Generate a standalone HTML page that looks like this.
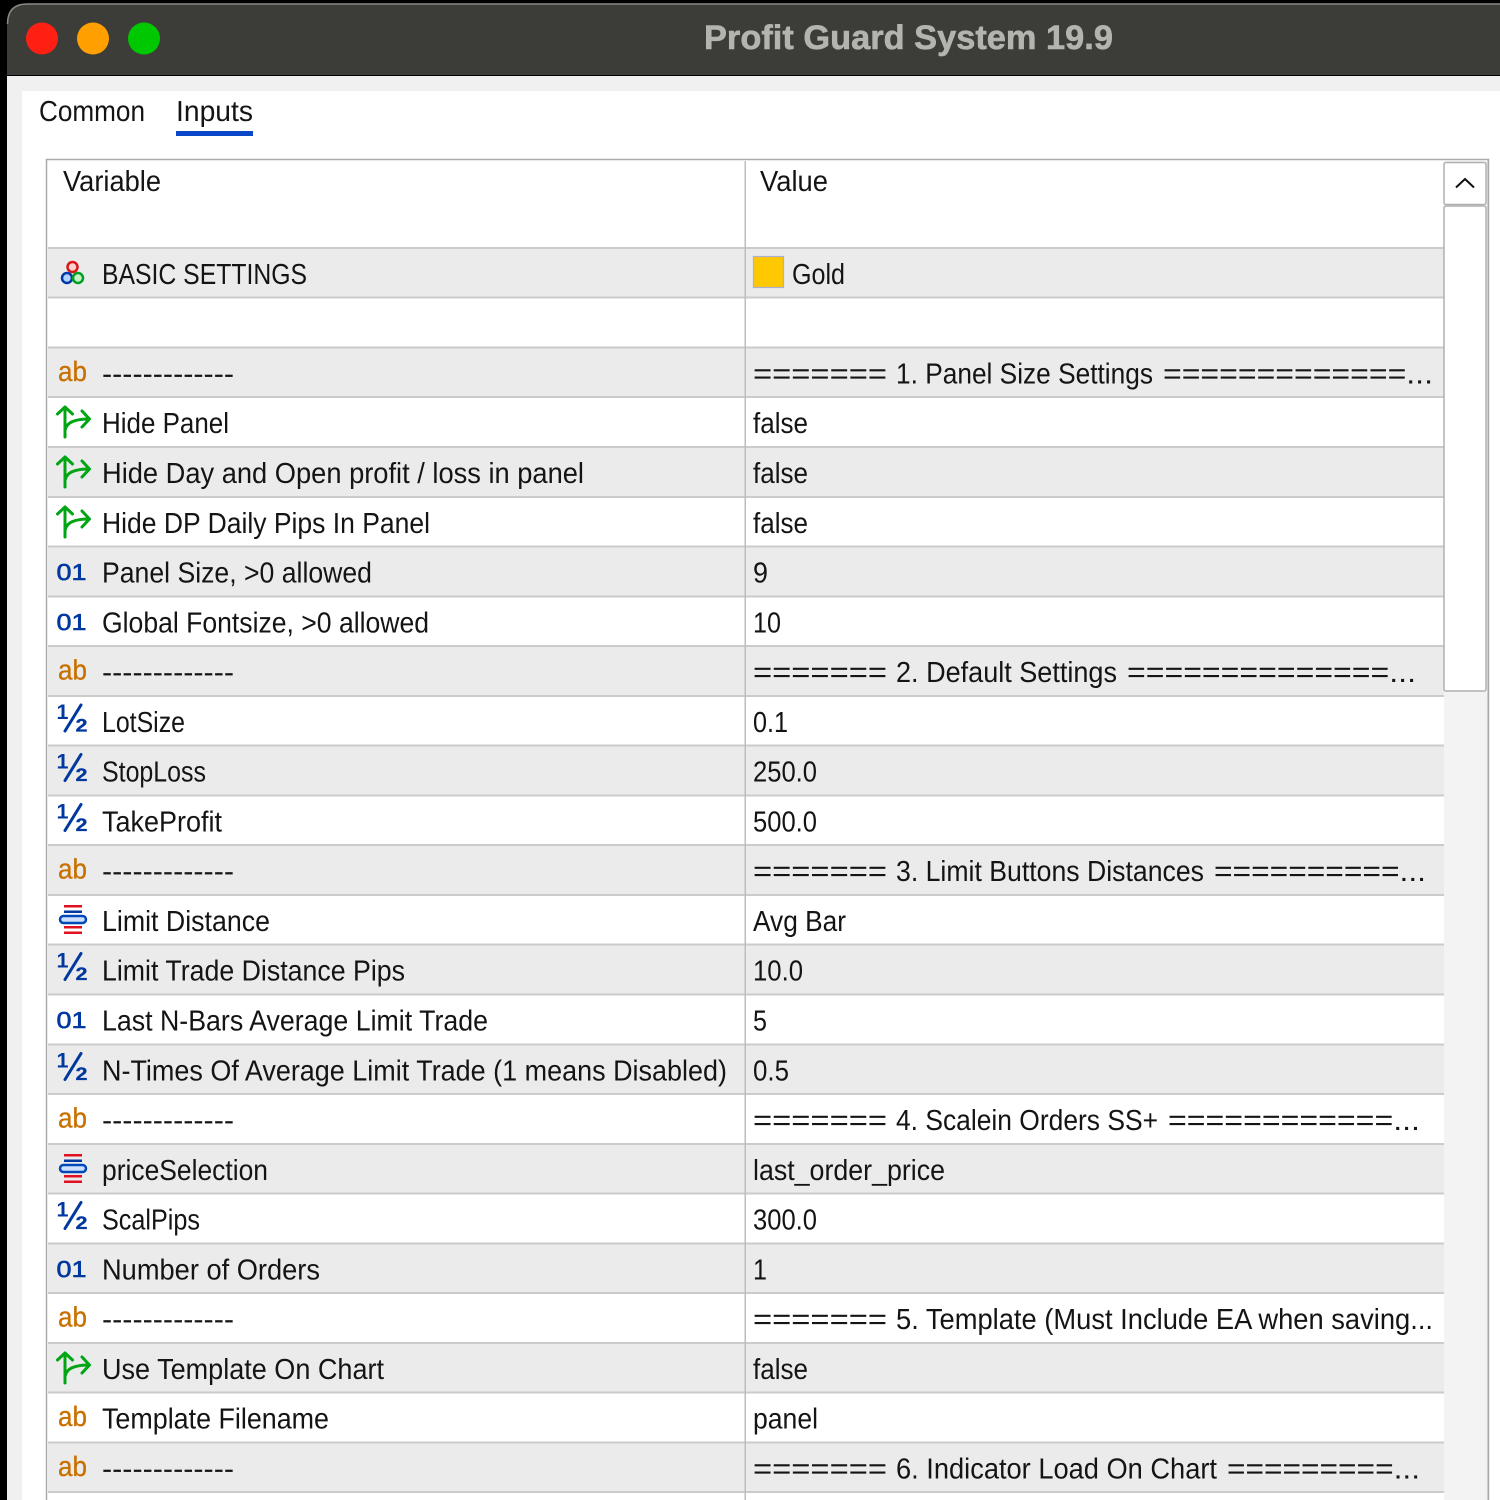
<!DOCTYPE html>
<html><head><meta charset="utf-8"><title>Profit Guard System 19.9</title>
<style>
html,body{margin:0;padding:0;background:#000;width:1500px;height:1500px;overflow:hidden}
svg{display:block}
text{font-family:"Liberation Sans",sans-serif;text-rendering:geometricPrecision}
.t{font-size:29px;fill:#141414}
.ab{font-size:28px;fill:#c87000;stroke:#c87000;stroke-width:.3}
.n{font-size:23px;fill:#0038a0;stroke:#0038a0;stroke-width:.6}
.h1{font-size:21px;fill:#0038a0;font-weight:bold}
.h2{font-size:18px;fill:#0038a0;font-weight:bold;stroke:#0038a0;stroke-width:.3}
.g{fill:#ebebeb}
.l{fill:#cbcbcb}
.arr{fill:none;stroke:#00a514;stroke-width:3;stroke-linecap:round;stroke-linejoin:round}
</style></head><body>
<svg width="1500" height="1500" viewBox="0 0 1500 1500" xmlns="http://www.w3.org/2000/svg">
<defs>
<g id="arrow"><path class="arr" d="M65 41V11M57.500 18L65 11L72.500 18M65.500 33C67 27 74 23 89 23M82 15L89.500 23L82 31"/></g>
<g id="half"><path d="M81 10L65 36" fill="none" stroke="#0038a0" stroke-width="3" stroke-linecap="round"/></g>
<g id="enum"><rect x="64" y="11" width="18" height="2.500" fill="#e01020"/><rect x="64" y="16.500" width="18" height="2.500" fill="#0038a0"/><rect x="60" y="22" width="26" height="7" rx="3.500" fill="#cfe0ff" stroke="#0048b8" stroke-width="2.500"/><rect x="64" y="32" width="18" height="2.500" fill="#e01020"/><rect x="64" y="37.500" width="18" height="2.500" fill="#e01020"/></g>
</defs>
<rect width="1500" height="1500" fill="#000"/>
<!-- window -->
<rect x="7" y="76" width="1493" height="1424" fill="#f0f0f0"/>
<rect x="22" y="91" width="1478" height="1409" fill="#fff"/>
<!-- title bar -->
<path d="M7 75V24Q7 4 27 4H1500V75Z" fill="#3c3d38" stroke="none"/>
<path d="M7.500 24Q7.500 4 27 4H1500" fill="none" stroke="#8a8a88" stroke-width="1.500"/>
<circle cx="42" cy="38.500" r="16" fill="#ff2014"/>
<circle cx="93" cy="38.500" r="16" fill="#ffa000"/>
<circle cx="144" cy="38.500" r="16" fill="#00c800"/>
<text x="704" y="49" font-size="34" font-weight="bold" fill="#b4b4ae" stroke="#b4b4ae" stroke-width=".6" textLength="409" lengthAdjust="spacingAndGlyphs">Profit Guard System 19.9</text>
<!-- tabs -->
<text class="t" x="39" y="121" textLength="106" lengthAdjust="spacingAndGlyphs">Common</text>
<text class="t" x="176" y="121" textLength="77" lengthAdjust="spacingAndGlyphs">Inputs</text>
<rect x="176" y="131" width="77" height="5" fill="#0a46c8"/>
<!-- table frame -->
<rect x="46.500" y="159.500" width="1442" height="1345" fill="#fff" stroke="#aaa" stroke-width="1.500"/>
<text class="t" x="63" y="191" textLength="98" lengthAdjust="spacingAndGlyphs">Variable</text>
<text class="t" x="760" y="191" textLength="68" lengthAdjust="spacingAndGlyphs">Value</text>
<!-- row backgrounds -->
<rect class="g" x="48" y="247" width="1396" height="50"/>
<rect class="g" x="48" y="347" width="1396" height="50"/>
<rect class="g" x="48" y="446.500" width="1396" height="50"/>
<rect class="g" x="48" y="546" width="1396" height="50"/>
<rect class="g" x="48" y="645.500" width="1396" height="50"/>
<rect class="g" x="48" y="745" width="1396" height="50"/>
<rect class="g" x="48" y="845" width="1396" height="50"/>
<rect class="g" x="48" y="944.500" width="1396" height="50"/>
<rect class="g" x="48" y="1044" width="1396" height="50"/>
<rect class="g" x="48" y="1143.500" width="1396" height="50"/>
<rect class="g" x="48" y="1243" width="1396" height="50"/>
<rect class="g" x="48" y="1342.500" width="1396" height="50"/>
<rect class="g" x="48" y="1442" width="1396" height="50"/>
<!-- row lines -->
<rect class="l" x="48" y="247" width="1396" height="2"/>
<rect class="l" x="48" y="296.500" width="1396" height="2"/>
<rect class="l" x="48" y="346.500" width="1396" height="2"/>
<rect class="l" x="48" y="396" width="1396" height="2"/>
<rect class="l" x="48" y="446" width="1396" height="2"/>
<rect class="l" x="48" y="496" width="1396" height="2"/>
<rect class="l" x="48" y="545.500" width="1396" height="2"/>
<rect class="l" x="48" y="595.500" width="1396" height="2"/>
<rect class="l" x="48" y="645" width="1396" height="2"/>
<rect class="l" x="48" y="695" width="1396" height="2"/>
<rect class="l" x="48" y="744.500" width="1396" height="2"/>
<rect class="l" x="48" y="794.500" width="1396" height="2"/>
<rect class="l" x="48" y="844" width="1396" height="2"/>
<rect class="l" x="48" y="894" width="1396" height="2"/>
<rect class="l" x="48" y="943.500" width="1396" height="2"/>
<rect class="l" x="48" y="993.500" width="1396" height="2"/>
<rect class="l" x="48" y="1043.500" width="1396" height="2"/>
<rect class="l" x="48" y="1093" width="1396" height="2"/>
<rect class="l" x="48" y="1143" width="1396" height="2"/>
<rect class="l" x="48" y="1192.500" width="1396" height="2"/>
<rect class="l" x="48" y="1242.500" width="1396" height="2"/>
<rect class="l" x="48" y="1292" width="1396" height="2"/>
<rect class="l" x="48" y="1342" width="1396" height="2"/>
<rect class="l" x="48" y="1391.500" width="1396" height="2"/>
<rect class="l" x="48" y="1441.500" width="1396" height="2"/>
<rect class="l" x="48" y="1491" width="1396" height="2"/>
<rect x="744.500" y="161" width="1.500" height="1340" fill="#bdbdbd"/>

<!-- row 0 -->
<g transform="translate(0,247)">
<circle cx="72.500" cy="20" r="5" fill="#ffd0d0" stroke="#d81818" stroke-width="2.500"/>
<circle cx="67" cy="31" r="5" fill="#b0d4ff" stroke="#0038a8" stroke-width="2.500"/>
<circle cx="78" cy="31" r="5" fill="#c8f0c8" stroke="#00a020" stroke-width="2.500"/>
<text class="t" x="102" y="37" textLength="205" lengthAdjust="spacingAndGlyphs">BASIC SETTINGS</text>
<rect x="753.500" y="9.500" width="30" height="31" fill="#ffc800" stroke="#a8b0d8" stroke-width="1.200"/>
<text class="t" x="792" y="37" textLength="53" lengthAdjust="spacingAndGlyphs">Gold</text>
</g>
<!-- row 2 -->
<g transform="translate(0,346.500)">
<text class="ab" x="58" y="34.500" textLength="29" lengthAdjust="spacingAndGlyphs">ab</text>
<text class="t" x="102" y="37" textLength="132" lengthAdjust="spacingAndGlyphs">-------------</text>
<text class="t" x="753" y="37" textLength="134" lengthAdjust="spacingAndGlyphs">=======</text>
<text class="t" x="896" y="37" textLength="257" lengthAdjust="spacingAndGlyphs">1. Panel Size Settings</text>
<text class="t" x="1163" y="37" textLength="270" lengthAdjust="spacingAndGlyphs">=============...</text>
</g>
<!-- row 3 -->
<g transform="translate(0,396)"><use href="#arrow"/>
<text class="t" x="102" y="37" textLength="127" lengthAdjust="spacingAndGlyphs">Hide Panel</text>
<text class="t" x="753" y="37" textLength="55" lengthAdjust="spacingAndGlyphs">false</text></g>
<!-- row 4 -->
<g transform="translate(0,446)"><use href="#arrow"/>
<text class="t" x="102" y="37" textLength="482" lengthAdjust="spacingAndGlyphs">Hide Day and Open profit / loss in panel</text>
<text class="t" x="753" y="37" textLength="55" lengthAdjust="spacingAndGlyphs">false</text></g>
<!-- row 5 -->
<g transform="translate(0,496)"><use href="#arrow"/>
<text class="t" x="102" y="37" textLength="328" lengthAdjust="spacingAndGlyphs">Hide DP Daily Pips In Panel</text>
<text class="t" x="753" y="37" textLength="55" lengthAdjust="spacingAndGlyphs">false</text></g>
<!-- row 6 -->
<g transform="translate(0,545.500)">
<text class="n" x="56.500" y="34.500" textLength="30" lengthAdjust="spacingAndGlyphs">01</text>
<text class="t" x="102" y="37" textLength="270" lengthAdjust="spacingAndGlyphs">Panel Size, &gt;0 allowed</text>
<text class="t" x="753" y="37" textLength="15" lengthAdjust="spacingAndGlyphs">9</text></g>
<!-- row 7 -->
<g transform="translate(0,595.500)">
<text class="n" x="56.500" y="34.500" textLength="30" lengthAdjust="spacingAndGlyphs">01</text>
<text class="t" x="102" y="37" textLength="327" lengthAdjust="spacingAndGlyphs">Global Fontsize, &gt;0 allowed</text>
<text class="t" x="753" y="37" textLength="28" lengthAdjust="spacingAndGlyphs">10</text></g>
<!-- row 8 -->
<g transform="translate(0,645)">
<text class="ab" x="58" y="34.500" textLength="29" lengthAdjust="spacingAndGlyphs">ab</text>
<text class="t" x="102" y="37" textLength="132" lengthAdjust="spacingAndGlyphs">-------------</text>
<text class="t" x="753" y="37" textLength="134" lengthAdjust="spacingAndGlyphs">=======</text>
<text class="t" x="896" y="37" textLength="221" lengthAdjust="spacingAndGlyphs">2. Default Settings</text>
<text class="t" x="1127" y="37" textLength="289" lengthAdjust="spacingAndGlyphs">==============...</text></g>
<!-- row 9 -->
<g transform="translate(0,695)"><use href="#half"/>
<text class="h1" x="56.500" y="24" textLength="12" lengthAdjust="spacingAndGlyphs">1</text>
<text class="h2" x="75.500" y="36.500" textLength="12" lengthAdjust="spacingAndGlyphs">2</text>
<text class="t" x="102" y="37" textLength="83" lengthAdjust="spacingAndGlyphs">LotSize</text>
<text class="t" x="753" y="37" textLength="35" lengthAdjust="spacingAndGlyphs">0.1</text></g>
<!-- row 10 -->
<g transform="translate(0,744.500)"><use href="#half"/>
<text class="h1" x="56.500" y="24" textLength="12" lengthAdjust="spacingAndGlyphs">1</text>
<text class="h2" x="75.500" y="36.500" textLength="12" lengthAdjust="spacingAndGlyphs">2</text>
<text class="t" x="102" y="37" textLength="104" lengthAdjust="spacingAndGlyphs">StopLoss</text>
<text class="t" x="753" y="37" textLength="64" lengthAdjust="spacingAndGlyphs">250.0</text></g>
<!-- row 11 -->
<g transform="translate(0,794.500)"><use href="#half"/>
<text class="h1" x="56.500" y="24" textLength="12" lengthAdjust="spacingAndGlyphs">1</text>
<text class="h2" x="75.500" y="36.500" textLength="12" lengthAdjust="spacingAndGlyphs">2</text>
<text class="t" x="102" y="37" textLength="120" lengthAdjust="spacingAndGlyphs">TakeProfit</text>
<text class="t" x="753" y="37" textLength="64" lengthAdjust="spacingAndGlyphs">500.0</text></g>
<!-- row 12 -->
<g transform="translate(0,844)">
<text class="ab" x="58" y="34.500" textLength="29" lengthAdjust="spacingAndGlyphs">ab</text>
<text class="t" x="102" y="37" textLength="132" lengthAdjust="spacingAndGlyphs">-------------</text>
<text class="t" x="753" y="37" textLength="134" lengthAdjust="spacingAndGlyphs">=======</text>
<text class="t" x="896" y="37" textLength="308" lengthAdjust="spacingAndGlyphs">3. Limit Buttons Distances</text>
<text class="t" x="1214" y="37" textLength="212" lengthAdjust="spacingAndGlyphs">==========...</text></g>
<!-- row 13 -->
<g transform="translate(0,894)"><use href="#enum"/>
<text class="t" x="102" y="37" textLength="168" lengthAdjust="spacingAndGlyphs">Limit Distance</text>
<text class="t" x="753" y="37" textLength="93" lengthAdjust="spacingAndGlyphs">Avg Bar</text></g>
<!-- row 14 -->
<g transform="translate(0,943.500)"><use href="#half"/>
<text class="h1" x="56.500" y="24" textLength="12" lengthAdjust="spacingAndGlyphs">1</text>
<text class="h2" x="75.500" y="36.500" textLength="12" lengthAdjust="spacingAndGlyphs">2</text>
<text class="t" x="102" y="37" textLength="303" lengthAdjust="spacingAndGlyphs">Limit Trade Distance Pips</text>
<text class="t" x="753" y="37" textLength="50" lengthAdjust="spacingAndGlyphs">10.0</text></g>
<!-- row 15 -->
<g transform="translate(0,993.500)">
<text class="n" x="56.500" y="34.500" textLength="30" lengthAdjust="spacingAndGlyphs">01</text>
<text class="t" x="102" y="37" textLength="386" lengthAdjust="spacingAndGlyphs">Last N-Bars Average Limit Trade</text>
<text class="t" x="753" y="37" textLength="14" lengthAdjust="spacingAndGlyphs">5</text></g>
<!-- row 16 -->
<g transform="translate(0,1043.500)"><use href="#half"/>
<text class="h1" x="56.500" y="24" textLength="12" lengthAdjust="spacingAndGlyphs">1</text>
<text class="h2" x="75.500" y="36.500" textLength="12" lengthAdjust="spacingAndGlyphs">2</text>
<text class="t" x="102" y="37" textLength="625" lengthAdjust="spacingAndGlyphs">N-Times Of Average Limit Trade (1 means Disabled)</text>
<text class="t" x="753" y="37" textLength="36" lengthAdjust="spacingAndGlyphs">0.5</text></g>
<!-- row 17 -->
<g transform="translate(0,1093)">
<text class="ab" x="58" y="34.500" textLength="29" lengthAdjust="spacingAndGlyphs">ab</text>
<text class="t" x="102" y="37" textLength="132" lengthAdjust="spacingAndGlyphs">-------------</text>
<text class="t" x="753" y="37" textLength="134" lengthAdjust="spacingAndGlyphs">=======</text>
<text class="t" x="896" y="37" textLength="262" lengthAdjust="spacingAndGlyphs">4. Scalein Orders SS+</text>
<text class="t" x="1168" y="37" textLength="252" lengthAdjust="spacingAndGlyphs">============...</text></g>
<!-- row 18 -->
<g transform="translate(0,1143)"><use href="#enum"/>
<text class="t" x="102" y="37" textLength="166" lengthAdjust="spacingAndGlyphs">priceSelection</text>
<text class="t" x="753" y="37" textLength="192" lengthAdjust="spacingAndGlyphs">last_order_price</text></g>
<!-- row 19 -->
<g transform="translate(0,1192.500)"><use href="#half"/>
<text class="h1" x="56.500" y="24" textLength="12" lengthAdjust="spacingAndGlyphs">1</text>
<text class="h2" x="75.500" y="36.500" textLength="12" lengthAdjust="spacingAndGlyphs">2</text>
<text class="t" x="102" y="37" textLength="98" lengthAdjust="spacingAndGlyphs">ScalPips</text>
<text class="t" x="753" y="37" textLength="64" lengthAdjust="spacingAndGlyphs">300.0</text></g>
<!-- row 20 -->
<g transform="translate(0,1242.500)">
<text class="n" x="56.500" y="34.500" textLength="30" lengthAdjust="spacingAndGlyphs">01</text>
<text class="t" x="102" y="37" textLength="218" lengthAdjust="spacingAndGlyphs">Number of Orders</text>
<text class="t" x="753" y="37" textLength="14" lengthAdjust="spacingAndGlyphs">1</text></g>
<!-- row 21 -->
<g transform="translate(0,1292)">
<text class="ab" x="58" y="34.500" textLength="29" lengthAdjust="spacingAndGlyphs">ab</text>
<text class="t" x="102" y="37" textLength="132" lengthAdjust="spacingAndGlyphs">-------------</text>
<text class="t" x="753" y="37" textLength="134" lengthAdjust="spacingAndGlyphs">=======</text>
<text class="t" x="896" y="37" textLength="537" lengthAdjust="spacingAndGlyphs">5. Template (Must Include EA when saving...</text></g>
<!-- row 22 -->
<g transform="translate(0,1342)"><use href="#arrow"/>
<text class="t" x="102" y="37" textLength="282" lengthAdjust="spacingAndGlyphs">Use Template On Chart</text>
<text class="t" x="753" y="37" textLength="55" lengthAdjust="spacingAndGlyphs">false</text></g>
<!-- row 23 -->
<g transform="translate(0,1391.500)">
<text class="ab" x="58" y="34.500" textLength="29" lengthAdjust="spacingAndGlyphs">ab</text>
<text class="t" x="102" y="37" textLength="227" lengthAdjust="spacingAndGlyphs">Template Filename</text>
<text class="t" x="753" y="37" textLength="65" lengthAdjust="spacingAndGlyphs">panel</text></g>
<!-- row 24 -->
<g transform="translate(0,1441.500)">
<text class="ab" x="58" y="34.500" textLength="29" lengthAdjust="spacingAndGlyphs">ab</text>
<text class="t" x="102" y="37" textLength="132" lengthAdjust="spacingAndGlyphs">-------------</text>
<text class="t" x="753" y="37" textLength="134" lengthAdjust="spacingAndGlyphs">=======</text>
<text class="t" x="896" y="37" textLength="321" lengthAdjust="spacingAndGlyphs">6. Indicator Load On Chart</text>
<text class="t" x="1227" y="37" textLength="193" lengthAdjust="spacingAndGlyphs">=========...</text></g>

<!-- scrollbar -->
<rect x="1444" y="161" width="44" height="1340" fill="#f3f3f3"/>
<rect x="1444" y="162.500" width="42" height="42" rx="2" fill="#fff" stroke="#b0b0b0" stroke-width="1.500"/>
<path d="M1456 187.500L1465 179L1474 187.500" fill="none" stroke="#111" stroke-width="2"/>
<rect x="1444" y="206" width="42" height="485" rx="2" fill="#fff" stroke="#b0b0b0" stroke-width="1.500"/>
<rect x="1487.500" y="160" width="1.500" height="1340" fill="#aaa"/>
</svg>
</body></html>
